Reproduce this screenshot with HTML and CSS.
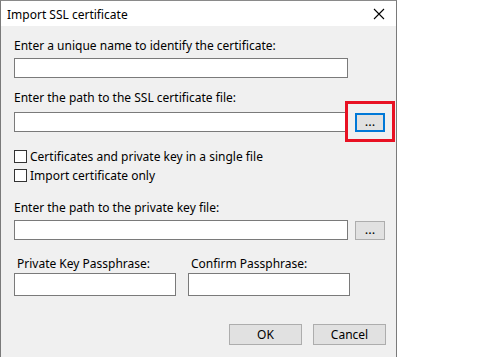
FILE: index.html
```html
<!DOCTYPE html>
<html lang="en">
<head>
    <meta charset="UTF-8">
    <title>Import SSL certificate</title>
    <link rel="stylesheet" href="styles.css">
</head>
<body>
    <div class="dialog">
        <div class="title-bar">
            <span class="title">Import SSL certificate</span>
            <svg class="close" width="12" height="12" viewBox="0 0 12 12">
                <path d="M1 1 L11 11 M11 1 L1 11" stroke="#000" stroke-width="1.1" fill="none"/>
            </svg>
        </div>
        <div class="content">
            <label class="lbl lbl-first">Enter a unique name to identify the certificate:</label>
            <div class="field-row">
                <input type="text" class="txt">
            </div>

            <label class="lbl lbl-second">Enter the path to the SSL certificate file:</label>
            <div class="field-row">
                <input type="text" class="txt">
                <span class="highlight">
                    <button class="btn-browse focused">...</button>
                </span>
            </div>

            <div class="checks">
                <label class="check"><span class="box"></span>Certificates and private key in a single file</label>
                <label class="check"><span class="box"></span>Import certificate only</label>
            </div>

            <label class="lbl lbl-key">Enter the path to the private key file:</label>
            <div class="field-row key-row">
                <input type="text" class="txt">
                <button class="btn-browse">...</button>
            </div>

            <div class="pass-row">
                <div class="pass-col">
                    <label class="lbl-pass">Private Key Passphrase:</label>
                    <input type="password" class="txt txt-pass">
                </div>
                <div class="pass-col">
                    <label class="lbl-pass">Confirm Passphrase:</label>
                    <input type="password" class="txt txt-pass">
                </div>
            </div>

            <div class="buttons">
                <button class="btn">OK</button>
                <button class="btn">Cancel</button>
            </div>
        </div>
    </div>
</body>
</html>
```

FILE: styles.css
```css
body {
    margin: 0;
    background-color: #ffffff;
    font-family: "Noto Sans", "Open Sans", sans-serif;
    font-size: 12px;
    color: #000000;
}

/* window frame */
.dialog {
    width: 395px;
    height: 357px;
    border-top: 1px solid #8a8a8a;
    border-left: 1px solid #7a7a7a;
    border-right: 1px solid #7a7a7a;
    background-color: #f0f0f0;
    box-sizing: content-box;
}

.title-bar {
    height: 25px;
    background-color: #ffffff;
    display: flex;
    align-items: center;
    justify-content: space-between;
    padding: 0 11px 0 6px;
}

.title {
    font-size: 12px;
    line-height: 15px;
    margin-top: 1px;
}

.close {
    display: block;
}

/* body of the dialog */
.content {
    padding: 12px 0 0 13px;
}

.lbl {
    display: block;
    line-height: 15px;
}

.lbl-first {
    margin-top: 0;
}

.lbl-second {
    margin-top: 12px;
}

.lbl-key {
    margin-top: 18px;
}

.field-row {
    display: flex;
    align-items: center;
    margin-top: 5px;
}

.lbl-second + .field-row {
    margin-top: 7px;
}

.key-row {
    margin-top: 5px;
}

.txt {
    width: 334px;
    height: 20px;
    box-sizing: border-box;
    border: 1px solid #7a7a7a;
    background-color: #ffffff;
    margin: 0;
    padding: 0 3px;
    font: inherit;
    outline: none;
}

.btn-browse {
    width: 30px;
    height: 19px;
    margin-left: 7px;
    box-sizing: border-box;
    border: 1px solid #adadad;
    background-color: #e1e1e1;
    font: inherit;
    font-size: 13px;
    line-height: 10px;
    padding: 0 0 3px;
    color: #000000;
}

.btn-browse.focused {
    border: 2px solid #0078d7;
    margin-left: 0;
}

/* red callout drawn over the browse button */
.highlight {
    position: relative;
    display: block;
    margin-left: 7px;
}

.highlight::after {
    content: "";
    position: absolute;
    left: -10px;
    top: -12px;
    right: -10px;
    bottom: -10px;
    border: 3px solid #e81123;
}

.checks {
    margin-top: 18px;
    display: flex;
    flex-direction: column;
    gap: 6px;
}

.check {
    display: flex;
    align-items: center;
    line-height: 13px;
}

.box {
    width: 13px;
    height: 13px;
    box-sizing: border-box;
    border: 1px solid #333333;
    background-color: #ffffff;
    margin-right: 3px;
}

.pass-row {
    display: flex;
    gap: 12px;
    margin-top: 16px;
}

.pass-col {
    display: flex;
    flex-direction: column;
}

.lbl-pass {
    line-height: 15px;
    padding-left: 3px;
    margin-bottom: 2px;
}

.txt-pass {
    width: 162px;
    height: 23px;
}

.buttons {
    display: flex;
    gap: 11px;
    margin: 28px 0 0 215px;
}

.btn {
    width: 73px;
    height: 21px;
    box-sizing: border-box;
    border: 1px solid #adadad;
    background-color: #e1e1e1;
    font: inherit;
    color: #000000;
    padding: 0;
}
```
